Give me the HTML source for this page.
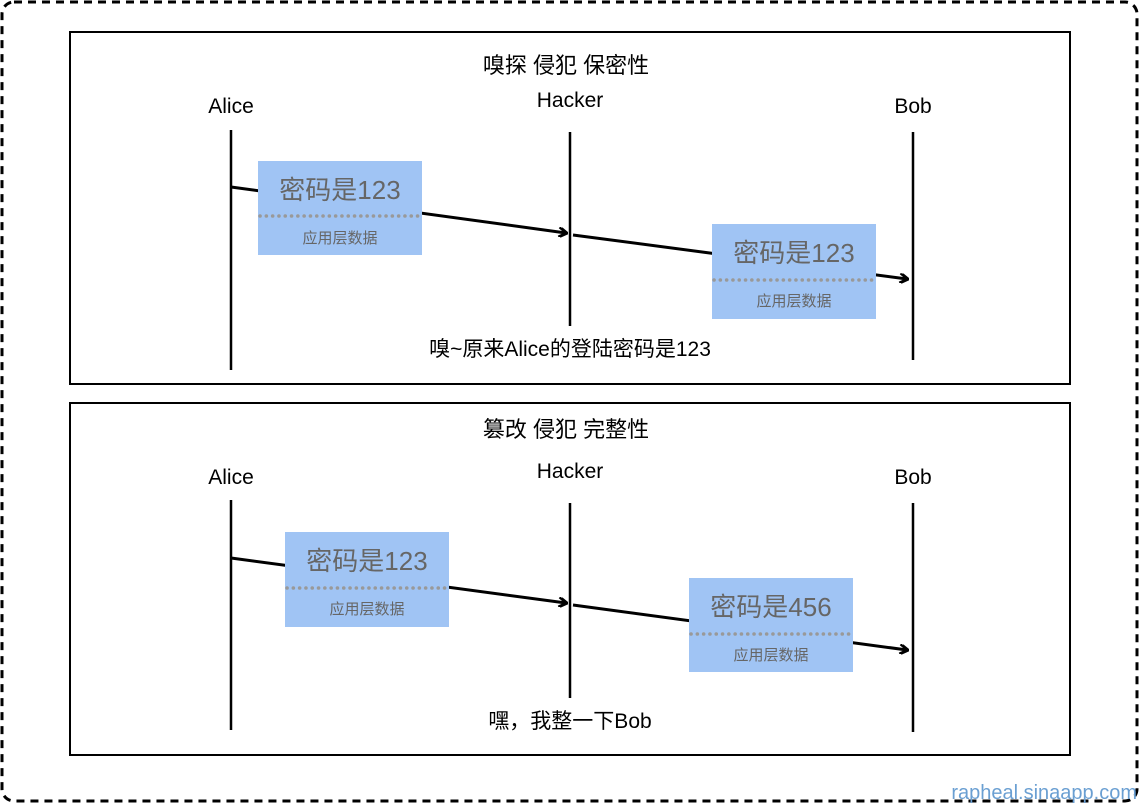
<!DOCTYPE html>
<html><head><meta charset="utf-8"><style>
html,body{margin:0;padding:0;background:#fff;}
svg text{font-family:"Liberation Sans","Noto Sans CJK SC",sans-serif;}
</style></head><body>
<svg width="1140" height="804" viewBox="0 0 1140 804" xmlns="http://www.w3.org/2000/svg">
<rect x="2" y="2" width="1135" height="799" rx="12" fill="none" stroke="#000" stroke-width="3" stroke-dasharray="8,6"/>
<defs>
<marker id="ah" markerWidth="10" markerHeight="10" refX="8" refY="5" orient="auto" markerUnits="userSpaceOnUse">
<path d="M1,0 L9,5 L1,10" fill="none" stroke="#000" stroke-width="3"/>
</marker>
</defs>
<rect x="70" y="32" width="1000" height="352" fill="none" stroke="#000" stroke-width="2"/>
<text x="566" y="73" font-size="22" text-anchor="middle">嗅探 侵犯 保密性</text>
<text x="231" y="113" font-size="21" text-anchor="middle">Alice</text>
<text x="570" y="107" font-size="21" text-anchor="middle">Hacker</text>
<text x="913" y="113" font-size="21" text-anchor="middle">Bob</text>
<line x1="231" y1="130" x2="231" y2="370" stroke="#000" stroke-width="2.5"/>
<line x1="570" y1="132" x2="570" y2="326" stroke="#000" stroke-width="2.5"/>
<line x1="913" y1="132" x2="913" y2="360" stroke="#000" stroke-width="2.5"/>
<line x1="231" y1="187" x2="566" y2="233" stroke="#000" stroke-width="3" marker-end="url(#ah)"/>
<line x1="573" y1="235" x2="907" y2="279" stroke="#000" stroke-width="3" marker-end="url(#ah)"/>
<rect x="258" y="161" width="164" height="94" fill="#a0c4f4"/>
<line x1="260" y1="216" x2="420" y2="216" stroke="#999" stroke-width="3.5" stroke-dasharray="0.1,6.2" stroke-linecap="round"/>
<text x="340" y="199" font-size="26" fill="#666" text-anchor="middle">密码是123</text>
<text x="340" y="243" font-size="15" fill="#666" text-anchor="middle">应用层数据</text>
<rect x="712" y="224" width="164" height="95" fill="#a0c4f4"/>
<line x1="714" y1="280" x2="874" y2="280" stroke="#999" stroke-width="3.5" stroke-dasharray="0.1,6.2" stroke-linecap="round"/>
<text x="794" y="262" font-size="26" fill="#666" text-anchor="middle">密码是123</text>
<text x="794" y="306" font-size="15" fill="#666" text-anchor="middle">应用层数据</text>
<text x="570" y="356" font-size="21" text-anchor="middle">嗅~原来Alice的登陆密码是123</text>
<rect x="70" y="403" width="1000" height="352" fill="none" stroke="#000" stroke-width="2"/>
<text x="566" y="437" font-size="22" text-anchor="middle">篡改 侵犯 完整性</text>
<text x="231" y="484" font-size="21" text-anchor="middle">Alice</text>
<text x="570" y="478" font-size="21" text-anchor="middle">Hacker</text>
<text x="913" y="484" font-size="21" text-anchor="middle">Bob</text>
<line x1="231" y1="500" x2="231" y2="730" stroke="#000" stroke-width="2.5"/>
<line x1="570" y1="503" x2="570" y2="698" stroke="#000" stroke-width="2.5"/>
<line x1="913" y1="503" x2="913" y2="732" stroke="#000" stroke-width="2.5"/>
<line x1="231" y1="558" x2="566" y2="603" stroke="#000" stroke-width="3" marker-end="url(#ah)"/>
<line x1="573" y1="605" x2="907" y2="650" stroke="#000" stroke-width="3" marker-end="url(#ah)"/>
<rect x="285" y="532" width="164" height="95" fill="#a0c4f4"/>
<line x1="287" y1="588" x2="447" y2="588" stroke="#999" stroke-width="3.5" stroke-dasharray="0.1,6.2" stroke-linecap="round"/>
<text x="367" y="570" font-size="26" fill="#666" text-anchor="middle">密码是123</text>
<text x="367" y="614" font-size="15" fill="#666" text-anchor="middle">应用层数据</text>
<rect x="689" y="578" width="164" height="94" fill="#a0c4f4"/>
<line x1="691" y1="634" x2="851" y2="634" stroke="#999" stroke-width="3.5" stroke-dasharray="0.1,6.2" stroke-linecap="round"/>
<text x="771" y="616" font-size="26" fill="#666" text-anchor="middle">密码是456</text>
<text x="771" y="660" font-size="15" fill="#666" text-anchor="middle">应用层数据</text>
<text x="570" y="728" font-size="21" text-anchor="middle">嘿，我整一下Bob</text>
<text x="1137" y="799" font-size="20" fill="#6a9fd2" text-anchor="end">rapheal.sinaapp.com</text>
</svg>
</body></html>
